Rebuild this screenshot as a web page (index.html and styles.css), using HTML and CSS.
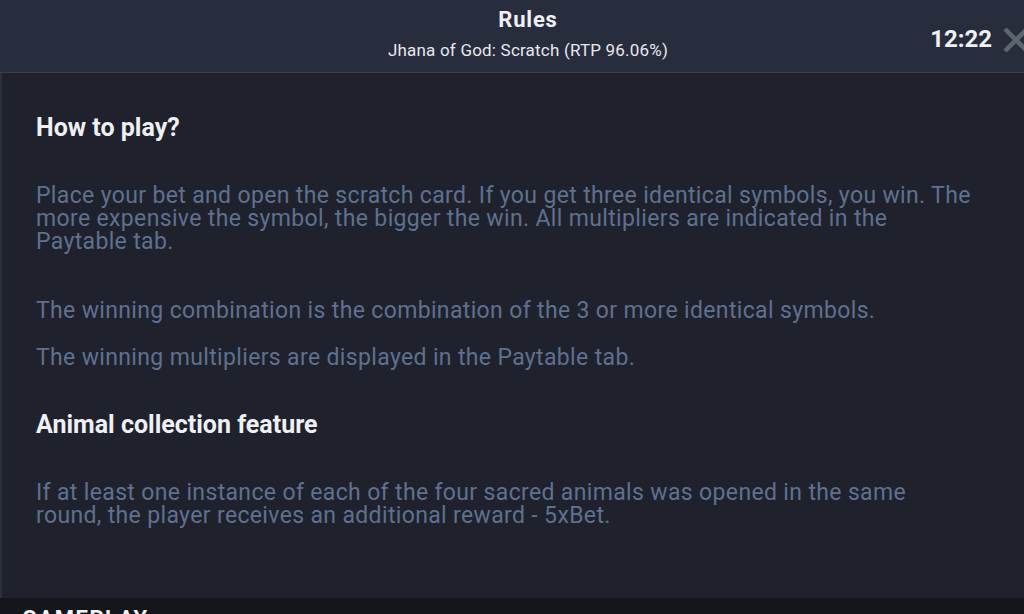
FILE: index.html
```html
<!DOCTYPE html>
<html lang="en">
<head>
  <meta charset="UTF-8" />
  <title>Rules</title>
  <link rel="stylesheet" href="styles.css">
</head>
<body>
  <div class="header">
    <div class="title-wrap">
      <h1 class="title">Rules</h1>
      <div class="subtitle">Jhana of God: Scratch (RTP 96.06%)</div>
    </div>
    <div class="clock">12:22</div>
    <button class="close-btn" aria-label="Close">
      <svg width="28" height="28" viewBox="0 0 28 28">
        <path d="M3 3 L25 25 M25 3 L3 25" stroke="#5b666f" stroke-width="4.5" stroke-linecap="butt" fill="none"/>
      </svg>
    </button>
  </div>

  <div class="rules">
    <h2>How to play?</h2>
    <p class="lead">Place your bet and open the scratch card. If you get three identical symbols, you win. The more expensive the symbol, the bigger the win. All multipliers are indicated in the Paytable tab.</p>
    <p>The winning combination is the combination of the 3 or more identical symbols.</p>
    <p>The winning multipliers are displayed in the Paytable tab.</p>

    <h2>Animal collection feature</h2>
    <p class="lead">If at least one instance of each of the four sacred animals was opened in the same round, the player receives an additional reward - 5xBet.</p>
  </div>

  <div class="next-section">GAMEPLAY</div>
</body>
</html>
```

FILE: styles.css
```css
html, body {
  margin: 0;
  height: 100%;
  overflow: hidden;
}
body {
  background: #1f222c;
  font-family: Roboto, 'Noto Sans', sans-serif;
}
.header {
  height: 72px;
  background: #282d3e;
  border-bottom: 1px solid #3a404e;
  display: flex;
  align-items: center;
  position: relative;
}
.title-wrap {
  flex: 1;
  text-align: center;
  padding-left: 32px;
}
.title {
  margin: 0;
  color: #eef0f4;
  font-size: 22px;
  font-weight: 700;
  line-height: 24px;
  letter-spacing: 0.8px;
  padding-bottom: 8px;
  margin-top: -4px;
}
.subtitle {
  color: #e6e8ec;
  font-size: 17px;
  line-height: 20px;
  letter-spacing: 0.2px;
}
.clock {
  position: absolute;
  right: 32px;
  top: 25px;
  color: #eef0f4;
  font-size: 24px;
  font-weight: 700;
  line-height: 28px;
}
.close-btn {
  position: absolute;
  right: -6px;
  top: 26px;
  background: transparent;
  border: none;
  padding: 0;
  width: 28px;
  height: 28px;
}
.rules {
  height: 484px;
  padding: 41px 49px 0 36px;
  border-left: 2px solid #29313b;
  overflow: hidden;
}
.rules h2 {
  margin: 0 0 42px -2px;
  color: #eef0f4;
  font-size: 25px;
  font-weight: 700;
  line-height: 28px;
}
.rules p {
  margin: 0 0 24px -2px;
  color: #5f7090;
  font-size: 23px;
  line-height: 23px;
  letter-spacing: 0.35px;
}
.rules p.lead {
  margin-bottom: 46px;
}
.rules p + h2 {
  margin-top: 42px;
}
.next-section {
  background: #14161c;
  color: #f2f3f5;
  font-size: 22px;
  font-weight: 700;
  letter-spacing: 1.5px;
  padding: 8px 22px 0;
  height: 40px;
}
```
